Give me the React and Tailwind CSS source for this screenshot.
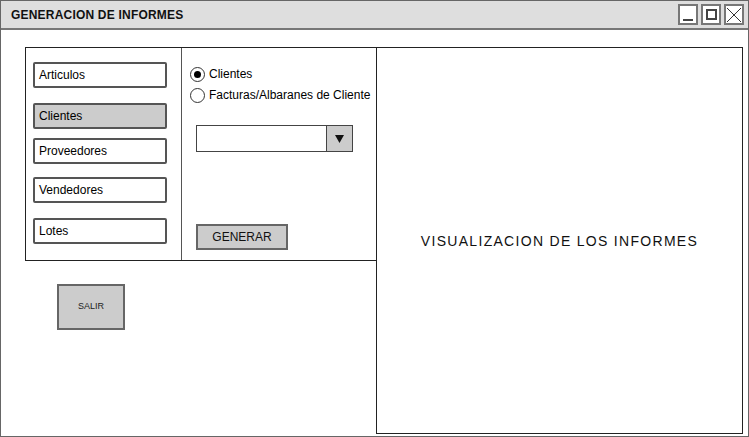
const font = { fontFamily: '"Liberation Sans", Arial, sans-serif' };

function NavButton({ label, active, className = "" }) {
  return (
    <div
      className={`w-[134px] h-[26px] border-2 border-[#555] rounded-[2px] flex items-center pl-[4px] text-[12px] text-black ${
        active ? "bg-[#cccccc]" : "bg-white"
      } ${className}`}
    >
      {label}
    </div>
  );
}

function Radio({ label, checked }) {
  return (
    <div className="flex items-center gap-[4px] h-[20px]">
      <div className="w-[15px] h-[15px] rounded-full border border-[#333] bg-white flex items-center justify-center">
        {checked && <div className="w-[7px] h-[7px] rounded-full bg-black" />}
      </div>
      <span className="text-[12px] text-black">{label}</span>
    </div>
  );
}

function WinButton({ children }) {
  return (
    <div className="w-[20px] h-[21px] border-2 border-[#777] bg-white flex items-center justify-center">
      {children}
    </div>
  );
}

export default function App() {
  return (
    <div style={font} className="w-[749px] h-[437px] bg-white border border-[#666] flex flex-col box-border">
      <div className="h-[29px] shrink-0 bg-[#dedede] border-b-2 border-[#777] flex items-center justify-between pl-[10px] pr-[4px]">
        <span className="text-[12px] font-bold text-[#111] tracking-[0.2px]">GENERACION DE INFORMES</span>
        <div className="flex gap-[3px]">
          <WinButton>
            <div className="w-[10px] h-[2px] bg-[#444] mt-[10px]" />
          </WinButton>
          <WinButton>
            <div className="w-[11px] h-[11px] border-2 border-[#444]" />
          </WinButton>
          <WinButton>
            <svg width="16" height="16" viewBox="0 0 16 16">
              <path d="M1 1 L15 15 M15 1 L1 15" stroke="#333" strokeWidth="1" />
            </svg>
          </WinButton>
        </div>
      </div>

      <div className="flex-1 flex pt-[17px] pl-[24px] pb-[2px]">
        <div className="flex flex-col">
          <div className="w-[351px] h-[214px] border-y border-l border-[#222] flex">
            <div className="w-[156px] border-r border-[#555] flex flex-col pl-[7px]">
              <NavButton label="Articulos" className="mt-[14px]" />
              <NavButton label="Clientes" active className="mt-[15px]" />
              <NavButton label="Proveedores" className="mt-[9px]" />
              <NavButton label="Vendedores" className="mt-[13px]" />
              <NavButton label="Lotes" className="mt-[15px]" />
            </div>
            <div className="flex-1 flex flex-col pl-[8px]">
              <div className="mt-[16px] flex flex-col gap-[1px]">
                <Radio label="Clientes" checked />
                <Radio label="Facturas/Albaranes de Cliente" />
              </div>
              <div className="mt-[20px] ml-[6px] w-[157px] h-[27px] border border-[#444] flex">
                <div className="flex-1 bg-white" />
                <div className="w-[26px] bg-[#cccccc] border-l border-[#444] flex items-center justify-center">
                  <svg width="9" height="8" viewBox="0 0 9 8">
                    <path d="M0 0 H9 L4.5 8 Z" fill="#111" />
                  </svg>
                </div>
              </div>
              <div className="mt-[72px] ml-[6px] w-[92px] h-[26px] border-2 border-[#666] bg-[#cccccc] flex items-center justify-center text-[12px] text-[#111]">
                GENERAR
              </div>
            </div>
          </div>
          <div className="mt-[23px] ml-[32px] w-[68px] h-[46px] border-2 border-[#666] bg-[#cccccc] flex items-center justify-center text-[9px] text-[#222]">
            SALIR
          </div>
        </div>
        <div className="w-[367px] h-[387px] border border-[#222] flex items-center justify-center">
          <span className="text-[14px] text-[#111] tracking-[1.3px] mt-[2px]">VISUALIZACION DE LOS INFORMES</span>
        </div>
      </div>
    </div>
  );
}
